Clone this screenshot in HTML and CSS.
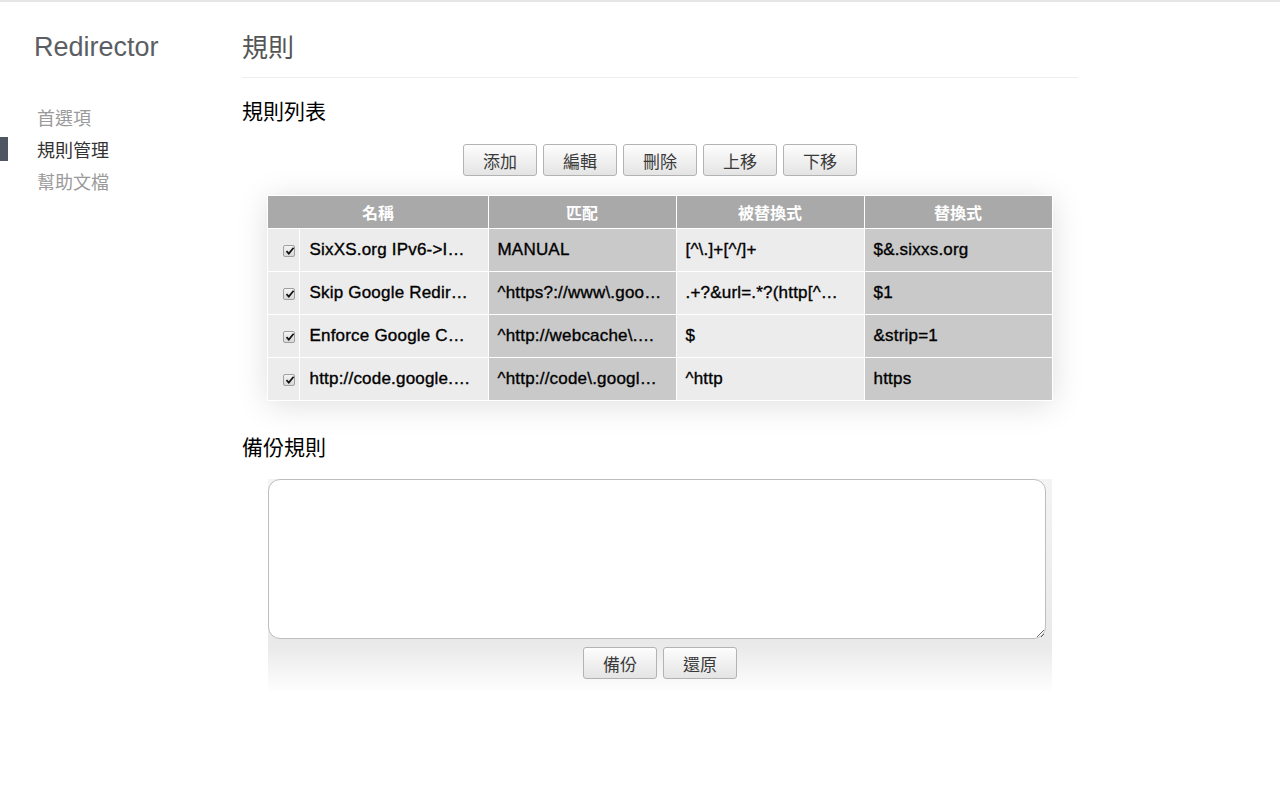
FILE: index.html
```html
<!DOCTYPE html>
<html lang="zh-Hant">
<head>
<meta charset="utf-8">
<title>Redirector</title>
<link rel="stylesheet" href="styles.css">
</head>
<body>
<div class="page">
  <aside class="sidebar">
    <div class="brand">Redirector</div>
    <nav class="nav">
      <a class="nav-item">首選項</a>
      <a class="nav-item active">規則管理</a>
      <a class="nav-item">幫助文檔</a>
    </nav>
  </aside>
  <main class="main">
    <h1 class="page-title">規則</h1>
    <h2 class="section-title">規則列表</h2>
    <div class="btn-row">
      <button class="btn">添加</button>
      <button class="btn">編輯</button>
      <button class="btn">刪除</button>
      <button class="btn">上移</button>
      <button class="btn">下移</button>
    </div>
    <table class="rules">
      <colgroup>
        <col class="c-check"><col class="c-name"><col class="c-match"><col class="c-sub"><col class="c-rep">
      </colgroup>
      <thead>
        <tr><th colspan="2">名稱</th><th>匹配</th><th>被替換式</th><th>替換式</th></tr>
      </thead>
      <tbody>
        <tr>
          <td class="chk"><span class="cb"><svg viewBox="0 0 12 12" width="12" height="12"><path d="M2.5 6.2 L4.8 8.6 L9.6 2.8" fill="none" stroke="#111" stroke-width="1.7"/></svg></span></td>
          <td class="light">SixXS.org IPv6-&gt;I…</td>
          <td class="dark">MANUAL</td>
          <td class="light">[^\.]+[^/]+</td>
          <td class="dark">$&amp;.sixxs.org</td>
        </tr>
        <tr>
          <td class="chk"><span class="cb"><svg viewBox="0 0 12 12" width="12" height="12"><path d="M2.5 6.2 L4.8 8.6 L9.6 2.8" fill="none" stroke="#111" stroke-width="1.7"/></svg></span></td>
          <td class="light">Skip Google Redir…</td>
          <td class="dark">^https?://www\.goo…</td>
          <td class="light">.+?&amp;url=.*?(http[^…</td>
          <td class="dark">$1</td>
        </tr>
        <tr>
          <td class="chk"><span class="cb"><svg viewBox="0 0 12 12" width="12" height="12"><path d="M2.5 6.2 L4.8 8.6 L9.6 2.8" fill="none" stroke="#111" stroke-width="1.7"/></svg></span></td>
          <td class="light">Enforce Google C…</td>
          <td class="dark">^http://webcache\.…</td>
          <td class="light">$</td>
          <td class="dark">&amp;strip=1</td>
        </tr>
        <tr>
          <td class="chk"><span class="cb"><svg viewBox="0 0 12 12" width="12" height="12"><path d="M2.5 6.2 L4.8 8.6 L9.6 2.8" fill="none" stroke="#111" stroke-width="1.7"/></svg></span></td>
          <td class="light">http://code.google.…</td>
          <td class="dark">^http://code\.googl…</td>
          <td class="light">^http</td>
          <td class="dark">https</td>
        </tr>
      </tbody>
    </table>
    <h2 class="section-title backup-title">備份規則</h2>
    <div class="backup">
      <textarea class="backup-text"></textarea>
      <div class="btn-row backup-btns">
        <button class="btn">備份</button>
        <button class="btn">還原</button>
      </div>
    </div>
  </main>
</div>
</body>
</html>
```
FILE: styles.css
```css
html, body {
  margin: 0;
  padding: 0;
  background: #fff;
}
body {
  border-top: 2px solid #e6e6e6;
  font-family: "Liberation Sans", "Noto Sans CJK TC", Arial, sans-serif;
  color: #000;
}
.page {
  display: flex;
  align-items: flex-start;
}
.sidebar {
  width: 242px;
  flex: none;
}
.brand {
  margin-top: 29px;
  padding-left: 34px;
  font-size: 27px;
  line-height: 32px;
  color: #5b5e63;
}
.nav {
  margin-top: 38px;
  display: flex;
  flex-direction: column;
}
.nav-item {
  display: flex;
  align-items: center;
  height: 32px;
  font-family: "Noto Sans CJK TC", sans-serif;
  font-size: 18px;
  color: #9a9a9a;
  cursor: pointer;
}
.nav-item::before {
  content: "";
  width: 8px;
  height: 24px;
  margin-right: 29px;
  background: transparent;
}
.nav-item.active {
  color: #333;
}
.nav-item.active::before {
  background: #4e5661;
}
.main {
  width: 836px;
  flex: none;
}
.page-title {
  margin: 28px 0 0;
  padding-bottom: 15px;
  border-bottom: 1px solid #eeeeee;
  font-family: "Noto Sans CJK TC", sans-serif;
  font-weight: normal;
  font-size: 26px;
  line-height: 32px;
  color: #555;
}
.section-title {
  margin: 18px 0 0;
  font-family: "Noto Sans CJK TC", sans-serif;
  font-weight: normal;
  font-size: 21px;
  line-height: 28px;
  color: #000;
}
.btn-row {
  display: flex;
  justify-content: center;
  gap: 6px;
  margin-top: 20px;
}
.btn {
  width: 74px;
  height: 32px;
  padding: 0;
  border: 1px solid #b3b3b3;
  border-radius: 3px;
  background: linear-gradient(#fdfdfd, #e4e4e4);
  font-family: "Noto Sans CJK TC", sans-serif;
  font-size: 17px;
  color: #3a3a3a;
  cursor: pointer;
}
.rules {
  width: 784px;
  margin: 19px auto 0;
  table-layout: fixed;
  border-collapse: collapse;
  box-shadow: 0 4px 30px rgba(0, 0, 0, 0.13);
  background: #fff;
}
.c-check { width: 32px; }
.c-name { width: 188px; }
.c-match { width: 188px; }
.c-sub { width: 188px; }
.c-rep { width: 188px; }
.rules th {
  height: 32px;
  padding: 0;
  background: #a9a9a9;
  color: #fff;
  font-family: "Noto Sans CJK TC", sans-serif;
  font-size: 16px;
  font-weight: bold;
  border: 1px solid #fff;
}
.rules td {
  height: 42px;
  padding: 0 4px 0 9px;
  border: 1px solid #fff;
  font-size: 17px;
  font-weight: normal;
  letter-spacing: 0.2px;
  -webkit-text-stroke: 0.35px #000;
  color: #000;
  white-space: nowrap;
  overflow: hidden;
  text-overflow: ellipsis;
}
.rules td.light { background: #ececec; }
.rules td.dark { background: #c9c9c9; }
.rules td.chk {
  background: #ececec;
  padding: 0 0 0 15px;
  text-align: left;
}
.cb {
  display: inline-flex;
  width: 10px;
  height: 10px;
  border: 1px solid #a0a0a0;
  border-radius: 2px;
  background: linear-gradient(#f4f4f4, #d8d8d8);
  vertical-align: middle;
  position: relative;
}
.cb svg {
  position: absolute;
  left: 0;
  top: -1px;
}
.backup-title {
  margin-top: 31px;
}
.backup {
  width: 784px;
  margin: 19px auto 0;
  padding-bottom: 12px;
  background: linear-gradient(to bottom, #f3f3f3 0px, #e9e9e9 165px, #ffffff 215px);
}
.backup-text {
  display: block;
  box-sizing: border-box;
  width: 778px;
  height: 160px;
  margin: 0;
  border: 1px solid #bdbdbd;
  border-radius: 12px;
  background: #fff;
  resize: both;
  outline: none;
}
.backup-btns {
  margin-top: 8px;
}
```
